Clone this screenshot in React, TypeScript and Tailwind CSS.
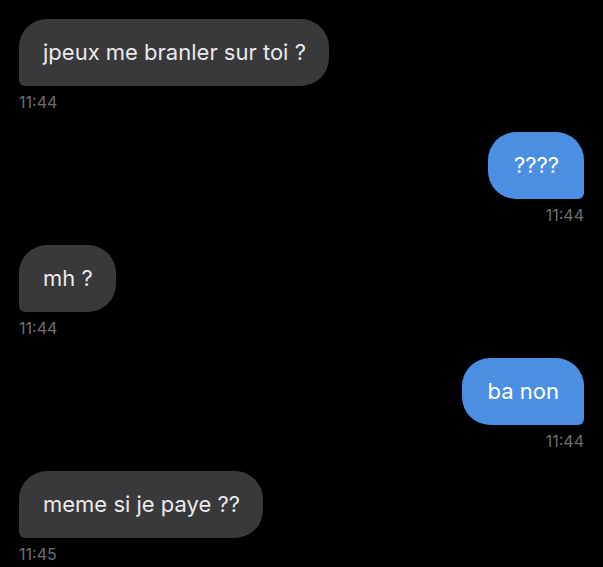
const messages = [
  { text: 'jpeux me branler sur toi ?', time: '11:44', mine: false },
  { text: '????', time: '11:44', mine: true },
  { text: 'mh ?', time: '11:44', mine: false },
  { text: 'ba non', time: '11:44', mine: true },
  { text: 'meme si je paye ??', time: '11:45', mine: false },
];

function Bubble({ text, time, mine }: { text: string; time: string; mine: boolean }) {
  return (
    <div className={`flex flex-col ${mine ? 'items-end' : 'items-start'}`}>
      <div
        className={`h-[67px] flex items-center text-[22px] leading-[27px] rounded-[28px] ${
          mine
            ? 'bg-[#4b8fe2] text-white rounded-br-[6px] pl-[26px] pr-[25px]'
            : 'bg-[#39393b] text-[#e9e9ea] rounded-bl-[6px] pl-[24px] pr-[23px]'
        }`}
      >
        {text}
      </div>
      <span className="mt-[6px] h-[20px] text-[16px] leading-[20px] text-[#6e6e72]">{time}</span>
    </div>
  );
}

export default function App() {
  return (
    <div
      className="w-[603px] h-[567px] bg-black px-[19px] pt-[19px] flex flex-col gap-[20px] overflow-hidden"
      style={{ fontFamily: 'Inter, "Liberation Sans", sans-serif' }}
    >
      {messages.map((m, i) => (
        <Bubble key={i} {...m} />
      ))}
    </div>
  );
}
